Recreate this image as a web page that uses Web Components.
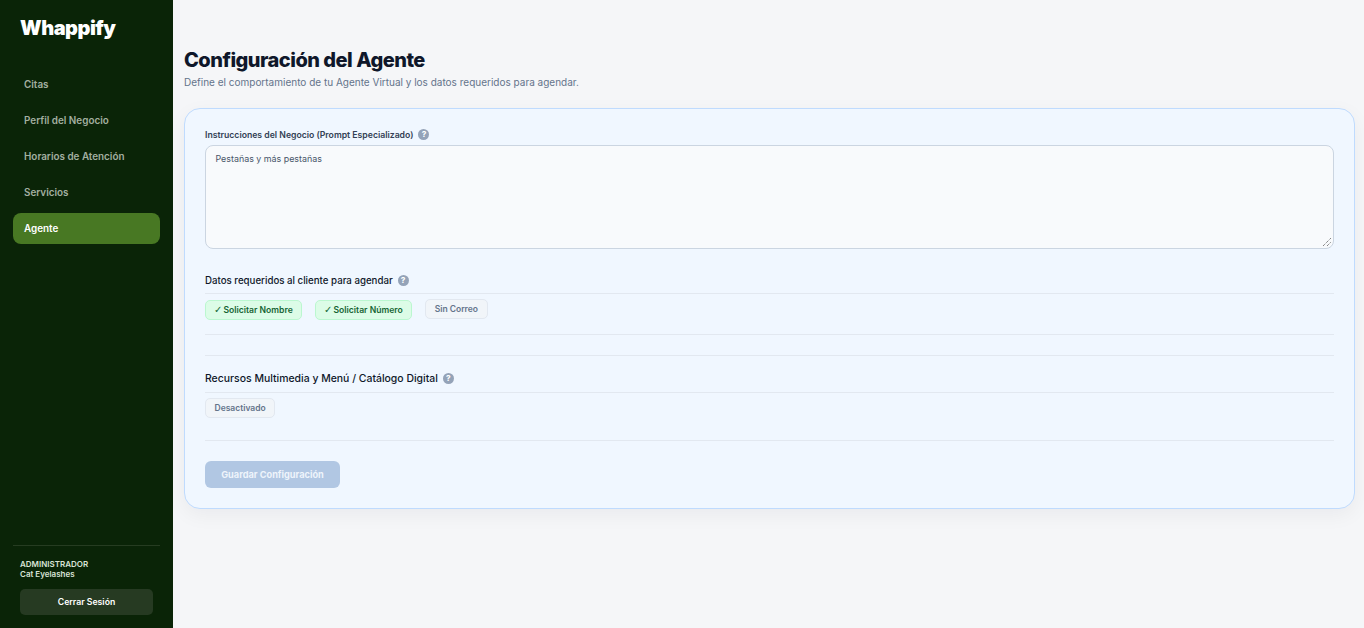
<!DOCTYPE html>
<html lang="es">
<head>
<meta charset="utf-8">
<title>Whappify</title>
<style>
  html, body { margin: 0; height: 100%; }
  body { font-family: Inter, "Liberation Sans", sans-serif; background: #f3f4f6; }
  app-shell { height: 628px; }
</style>
</head>
<body>
<app-shell>
  <barra-lateral slot="lateral">
    <item-nav>Citas</item-nav>
    <item-nav>Perfil del Negocio</item-nav>
    <item-nav>Horarios de Atención</item-nav>
    <item-nav>Servicios</item-nav>
    <item-nav activo>Agente</item-nav>
  </barra-lateral>
  <panel-agente></panel-agente>
</app-shell>

<script>
class ComponenteWeb extends HTMLElement {
  constructor() {
    super();
    this.raiz = this.attachShadow({mode: 'open'});
    this.raiz.innerHTML = `<style>${this.estilos()}</style>${this.plantilla()}`;
  }
  estilos() { return ''; }
  plantilla() { return '<slot></slot>'; }
}

class AppShell extends ComponenteWeb {
  estilos() { return `
    :host { display: flex; width: 100%; overflow: hidden; }
    main { flex: 1; min-width: 0; background: #f5f6f8; padding: 48px 9px 0 11px; }
  `; }
  plantilla() { return `<slot name="lateral"></slot><main><slot></slot></main>`; }
}

class BarraLateral extends ComponenteWeb {
  estilos() { return `
    :host { display: flex; flex-direction: column; flex: none; width: 173px; height: 628px;
      box-sizing: border-box; background: #0a2407; padding: 16px 13px 13px; }
    .logo { font: 900 20px/24px Inter, sans-serif; letter-spacing: -.5px; color: #fff; padding-left: 7px; }
    nav { display: flex; flex-direction: column; gap: 5px; margin-top: 29px; flex: 1; }
    .pie { border-top: 1px solid #263c21; padding: 13px 7px 0; }
    .rol, .nombre { font-size: 8px; line-height: 10px; font-weight: 600; color: #d9e3d6; }
    .nombre { margin-bottom: 10px; }
    button { display: block; width: 100%; height: 26px; border: 0; border-radius: 5px; background: #263a22;
      color: #fff; font: 600 8.7px Inter, sans-serif; padding: 0; }
  `; }
  plantilla() { return `
    <div class="logo">Whappify</div>
    <nav><slot></slot></nav>
    <div class="pie">
      <div class="rol">ADMINISTRADOR</div>
      <div class="nombre">Cat Eyelashes</div>
      <button>Cerrar Sesión</button>
    </div>`; }
}

class ItemNav extends ComponenteWeb {
  estilos() { return `
    :host { display: flex; align-items: center; box-sizing: border-box; height: 31px; padding: 0 11px 2px; border-radius: 8px;
      font-size: 9.9px; font-weight: 600; color: #a3afa0; }
    :host([activo]) { background: #487823; color: #fff; }
  `; }
}

class IconoAyuda extends ComponenteWeb {
  estilos() { return `
    :host { display: inline-flex; align-items: center; justify-content: center; flex: none; width: 11px; height: 11px;
      border-radius: 50%; background: #94a3b8; color: #fff; font: 800 8px/11px Inter, sans-serif; }
  `; }
  plantilla() { return '?'; }
}

class ChipOpcion extends ComponenteWeb {
  estilos() { return `
    :host { display: inline-flex; align-items: center; box-sizing: border-box; height: 19.5px; padding: 0 8.5px; border-radius: 5px;
      border: 1px solid #e2e8f0; background: #f1f5f9; color: #64748b; font-size: 8.5px; font-weight: 600; white-space: nowrap; }
    :host([activo]) { margin-top: 1px; padding: 0 8px; border-color: #bbf7d0; background: #dcfce7; color: #166534; font-size: 8.6px; }
    .marca { font-family: "DejaVu Sans", sans-serif; font-size: 10px; font-weight: 700; margin-right: 1px; }
    .marca:empty { display: none; }
  `; }
  plantilla() { return `<span class="marca">${this.hasAttribute('activo') ? '✓' : ''}</span><slot></slot>`; }
}

class TituloSeccion extends ComponenteWeb {
  estilos() { return `
    :host { display: flex; align-items: center; gap: 5px; color: #0f172a; }
    :host([variante="a"]) { font-size: 8.68px; font-weight: 600; color: #334155; }
    :host([variante="b"]) { font-size: 9.7px; font-weight: 500; }
    :host([variante="c"]) { font-size: 10.45px; font-weight: 500; }
  `; }
  plantilla() { return `<span><slot></slot></span><icono-ayuda></icono-ayuda>`; }
}

class PanelAgente extends ComponenteWeb {
  estilos() { return `
    :host { display: block; }
    h1 { margin: 0; font: 800 20px/25px Inter, sans-serif; letter-spacing: -.5px; color: #0f172a; }
    .sub { margin: 2px 0 0; font-size: 10px; line-height: 14px; color: #64748b; }
    .tarjeta { margin-top: 19px; height: 401px; box-sizing: border-box; padding: 20px; border: 1px solid #bfdbfe;
      border-radius: 16px; background: #f0f7ff; box-shadow: 0 6px 20px rgba(15,23,42,.05);
      display: flex; flex-direction: column; }
    .tarjeta > * { flex: none; }
    .caja { height: 103.5px; box-sizing: border-box; margin-top: 5px; border: 1px solid #cbd5e1; border-radius: 8px;
      background: #f8fafc; padding: 7px 9.5px; font-size: 8.9px; line-height: 12px; color: #475569; position: relative; }
    .agarre { position: absolute; right: 1px; bottom: 1px; }
    .cabecera { padding-bottom: 7px; border-bottom: 1px solid #e2e8f0; }
    .opciones { display: flex; align-items: flex-start; gap: 13.4px; margin-top: 5px; }
    hr { margin: 0; border: 0; border-top: 1px solid #e2e8f0; }
    button { align-self: flex-start; width: 135px; height: 27px; margin-top: 20px; border: 0; border-radius: 6px;
      background: #b1c7e3; color: #eef4fb; font: 700 9.2px Inter, sans-serif; padding: 0; }
  `; }
  plantilla() { return `
    <h1>Configuración del Agente</h1>
    <p class="sub">Define el comportamiento de tu Agente Virtual y los datos requeridos para agendar.</p>
    <section class="tarjeta">
      <titulo-seccion variante="a">Instrucciones del Negocio (Prompt Especializado)</titulo-seccion>
      <div class="caja">Pestañas y más pestañas
        <svg class="agarre" width="11" height="11" viewBox="0 0 11 11"><path d="M2 10 10 2M6 10l4-4" stroke="#555" stroke-width="1" stroke-dasharray="1 1" fill="none"/></svg>
      </div>
      <titulo-seccion variante="b" class="cabecera" style="margin-top:26.5px">Datos requeridos al cliente para agendar</titulo-seccion>
      <div class="opciones">
        <chip-opcion activo>Solicitar Nombre</chip-opcion>
        <chip-opcion activo>Solicitar Número</chip-opcion>
        <chip-opcion>Sin Correo</chip-opcion>
      </div>
      <hr style="margin-top:14px">
      <hr style="margin-top:20px">
      <titulo-seccion variante="c" class="cabecera" style="margin-top:16.5px">Recursos Multimedia y Menú / Catálogo Digital</titulo-seccion>
      <div class="opciones"><chip-opcion>Desactivado</chip-opcion></div>
      <hr style="margin-top:22.5px">
      <button>Guardar Configuración</button>
    </section>`; }
}

customElements.define('app-shell', AppShell);
customElements.define('barra-lateral', BarraLateral);
customElements.define('item-nav', ItemNav);
customElements.define('icono-ayuda', IconoAyuda);
customElements.define('chip-opcion', ChipOpcion);
customElements.define('titulo-seccion', TituloSeccion);
customElements.define('panel-agente', PanelAgente);
</script>
</body>
</html>
